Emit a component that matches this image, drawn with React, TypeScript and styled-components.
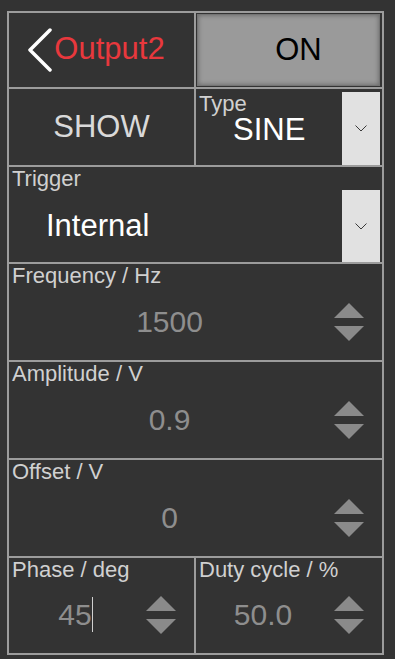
import React from "react";
import styled, { createGlobalStyle } from "styled-components";

const GlobalStyle = createGlobalStyle`
  body {
    margin: 0;
    background: #333333;
    font-family: "Liberation Sans", Arial, sans-serif;
  }
`;

const Panel = styled.div`
  margin: 11px 0 0 7px;
  width: 377px;
  box-sizing: border-box;
  display: grid;
  grid-template-columns: 185px 186px;
  grid-template-rows: 74px 76px 95px 96px 96px 96px 95px;
  gap: 2px;
  padding: 2px;
  background: #9c9c9c;
`;

const Cell = styled.div<{ $wide?: boolean }>`
  grid-column: ${(props) => (props.$wide ? "span 2" : "auto")};
  background: #333333;
  display: flex;
  flex-direction: column;
  min-width: 0;
`;

const TitleCell = styled(Cell)`
  flex-direction: row;
  align-items: center;
  justify-content: center;
  padding-right: 12px;
`;

const Title = styled.span`
  color: #e8383d;
  font-size: 31px;
  line-height: 34px;
  margin-top: -2px;
`;

const ToggleCell = styled(Cell)`
  padding: 1px 2px 1px 1px;
`;

const ToggleButton = styled.div`
  flex: 1;
  display: flex;
  align-items: center;
  justify-content: center;
  padding-left: 20px;
  background: #9a9a9a;
  border: 1px solid #747474;
  box-shadow: inset 0 0 5px rgba(0, 0, 0, 0.35);
  color: #000;
  font-size: 31px;
`;

const ShowCell = styled(Cell)`
  align-items: center;
  justify-content: center;
  color: #d9d9d9;
  font-size: 31px;
`;

const SelectCell = styled(Cell)<{ $inline?: boolean }>`
  flex-direction: ${(props) => (props.$inline ? "row" : "column")};
  padding: ${(props) => (props.$inline ? "3px 2px 0 0" : "0 2px 0 0")};
`;

const SelectBody = styled.div`
  flex: 1;
  display: flex;
  flex-direction: column;
`;

const SelectRow = styled.div`
  flex: 1;
  display: flex;
  align-items: center;
`;

const SelectValue = styled.div`
  flex: 1;
  padding-left: 37px;
  color: #ffffff;
  font-size: 31px;
  line-height: 30px;
`;

const DropBox = styled.div`
  width: 38px;
  align-self: stretch;
  background: #e1e1e1;
  display: flex;
  align-items: center;
  justify-content: center;
`;

const Label = styled.div`
  padding-left: 3px;
  color: #d0d0d0;
  font-size: 22px;
  line-height: 23px;
  white-space: nowrap;
`;

const ValueRow = styled.div`
  flex: 1;
  display: flex;
  align-items: center;
  padding-bottom: 4px;
`;

const Value = styled.div`
  flex: 1;
  text-align: center;
  color: #8e8e8e;
  font-size: 30px;
`;

const Caret = styled.span`
  display: inline-block;
  width: 1px;
  height: 35px;
  background: #d0d0d0;
  vertical-align: middle;
  margin-top: -4px;
`;

const Spinner = styled.svg`
  flex: none;
  margin: 0 18px 0 4px;
`;

const BackIcon = () => (
  <svg width="28" height="44" viewBox="0 0 28 44">
    <polyline
      points="24,2 4,22 24,42"
      fill="none"
      stroke="#ffffff"
      strokeWidth="3.5"
      strokeLinecap="round"
      strokeLinejoin="round"
    />
  </svg>
);

const Chevron = () => (
  <svg width="12" height="7" viewBox="0 0 12 7">
    <polyline points="0.5,0.5 6,6 11.5,0.5" fill="none" stroke="#3a3a3a" strokeWidth="1" />
  </svg>
);

const Arrows = () => (
  <Spinner width="30" height="38" viewBox="0 0 30 38">
    <polygon points="15,0 30,15 0,15" fill="#8a8a8a" />
    <polygon points="0,23 30,23 15,38" fill="#8a8a8a" />
  </Spinner>
);

interface NumberFieldProps {
  label: string;
  value: string;
  wide?: boolean;
  editing?: boolean;
}

const NumberField: React.FC<NumberFieldProps> = ({ label, value, wide, editing }) => (
  <Cell $wide={wide}>
    <Label>{label}</Label>
    <ValueRow>
      <Value>
        {value}
        {editing && <Caret />}
      </Value>
      <Arrows />
    </ValueRow>
  </Cell>
);

export default function App() {
  return (
    <>
      <GlobalStyle />
      <Panel>
        <TitleCell>
          <BackIcon />
          <Title>Output2</Title>
        </TitleCell>
        <ToggleCell>
          <ToggleButton>ON</ToggleButton>
        </ToggleCell>

        <ShowCell>SHOW</ShowCell>
        <SelectCell $inline>
          <SelectBody>
            <Label>Type</Label>
            <SelectValue>SINE</SelectValue>
          </SelectBody>
          <DropBox>
            <Chevron />
          </DropBox>
        </SelectCell>

        <SelectCell $wide>
          <Label>Trigger</Label>
          <SelectRow>
            <SelectValue>Internal</SelectValue>
            <DropBox>
              <Chevron />
            </DropBox>
          </SelectRow>
        </SelectCell>

        <NumberField wide label="Frequency / Hz" value="1500" />
        <NumberField wide label="Amplitude / V" value="0.9" />
        <NumberField wide label="Offset / V" value="0" />
        <NumberField label="Phase / deg" value="45" editing />
        <NumberField label="Duty cycle / %" value="50.0" />
      </Panel>
    </>
  );
}
